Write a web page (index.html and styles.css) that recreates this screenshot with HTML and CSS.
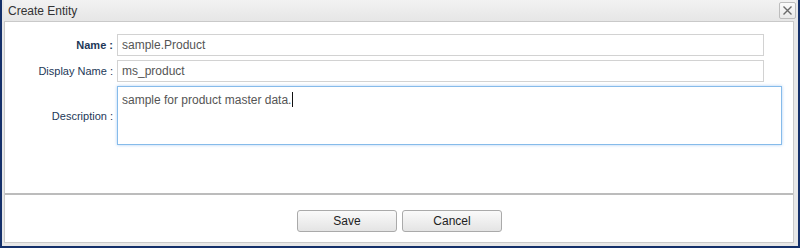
FILE: index.html
```html
<!DOCTYPE html>
<html lang="en">
<head>
<meta charset="utf-8">
<title>Create Entity</title>
<link rel="stylesheet" href="styles.css">
</head>
<body>
<div class="dialog">
  <div class="titlebar">
    <span class="title">Create Entity</span>
    <button class="close" type="button" aria-label="Close">
      <svg width="11" height="11" viewBox="0 0 11 11"><path d="M1.5 1.5 L9.5 9.5 M9.5 1.5 L1.5 9.5" stroke="#6a6a6a" stroke-width="1.4" fill="none"/></svg>
    </button>
  </div>
  <div class="panel">
    <div class="form">
      <label class="label strong">Name :</label>
      <div class="input short">sample.Product</div>
      <label class="label">Display Name :</label>
      <div class="input short">ms_product</div>
      <label class="label">Description :</label>
      <div class="textarea">sample for product master data.<span class="caret"></span></div>
    </div>
    <div class="buttons">
      <button class="btn" type="button">Save</button>
      <button class="btn" type="button">Cancel</button>
    </div>
  </div>
</div>
</body>
</html>
```
FILE: styles.css
```css
html, body {
  margin: 0;
  padding: 0;
  background: #ffffff;
}
body {
  font-family: "Liberation Sans", Arial, sans-serif;
}
.dialog {
  width: 800px;
  height: 248px;
  box-sizing: border-box;
  background: #e7e7e7;
  border-left: 2px solid #14306a;
  border-right: 2px solid #14306a;
  border-bottom: 2px solid #14306a;
  padding: 0 4px 3px 2px;
  display: flex;
  flex-direction: column;
}
.titlebar {
  height: 21px;
  flex: none;
  display: flex;
  align-items: center;
  justify-content: space-between;
  padding: 0 0 0 4px;
  margin-right: -2px;
  background: linear-gradient(#f2f2f2, #e6e6e6);
}
.title {
  font-size: 12px;
  color: #333333;
  padding-top: 1px;
}
.close {
  width: 17px;
  height: 17px;
  padding: 0;
  margin: 0;
  border: 1px solid #bdbdbd;
  border-radius: 2px;
  background: linear-gradient(#fbfbfb, #e9e9e9);
  display: flex;
  align-items: center;
  justify-content: center;
}
.close svg { display: block; }
.panel {
  flex: 1;
  background: #ffffff;
  border: 1px solid #c9c9c9;
  display: flex;
  flex-direction: column;
}
.form {
  height: 173px;
  box-sizing: border-box;
  padding: 12px 11px 0 0;
  border-bottom: 2px solid #bcbcbc;
  display: grid;
  grid-template-columns: 108px 1fr;
  column-gap: 4px;
  row-gap: 4px;
  align-items: center;
  align-content: start;
}
.label {
  font-size: 11px;
  color: #1d3858;
  text-align: right;
  white-space: nowrap;
}
.label.strong { font-weight: bold; }
.input, .textarea {
  box-sizing: border-box;
  font-size: 12px;
  color: #555555;
  background: #ffffff;
}
.input {
  height: 22px;
  border: 1px solid #d2d2d2;
  padding: 0 4px;
  line-height: 20px;
  margin-right: 18px;
}
.textarea {
  height: 59px;
  border: 1px solid #86bbea;
  box-shadow: 0 0 3px rgba(110, 170, 235, 0.55);
  padding: 5px 4px;
  line-height: 14px;
}
.caret {
  display: inline-block;
  width: 1px;
  height: 15px;
  background: #111;
  vertical-align: -3px;
  margin-left: 1px;
}
.buttons {
  flex: 1;
  display: flex;
  justify-content: center;
  align-items: flex-start;
  gap: 5px;
  padding-top: 15px;
  padding-left: 1px;
}
.btn {
  width: 100px;
  height: 22px;
  padding: 0;
  margin: 0;
  font-family: "Liberation Sans", Arial, sans-serif;
  font-size: 12px;
  color: #222222;
  border: 1px solid #aaaaaa;
  border-radius: 3px;
  background: linear-gradient(#fafafa, #e4e4e4);
}
```
